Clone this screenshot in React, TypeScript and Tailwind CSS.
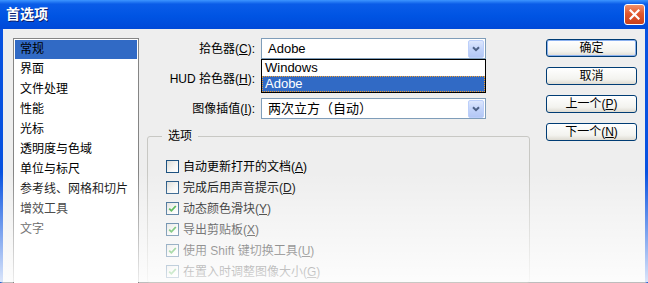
import React from 'react';

const font = "font-['Liberation_Sans','Noto_Sans_CJK_SC',sans-serif]";

const categories = [
  '常规',
  '界面',
  '文件处理',
  '性能',
  '光标',
  '透明度与色域',
  '单位与标尺',
  '参考线、网格和切片',
  '增效工具',
  '文字',
];

function Arrow() {
  return (
    <div className="flex h-[18px] w-[16px] items-center justify-center rounded-[2px] border border-[#bccffa] bg-[linear-gradient(180deg,#dde7fd_0%,#c3d4fa_50%,#b3c7f5_100%)]">
      <svg width="8" height="6" viewBox="0 0 8 6">
        <path d="M1 1.2 L4 4.2 L7 1.2" fill="none" stroke="#4d6185" strokeWidth="2" />
      </svg>
    </div>
  );
}

function Combo({ value }: { value: string }) {
  return (
    <div className="flex h-[21px] w-[225px] items-center justify-between border border-[#7f9db9] bg-white pl-[6px] pr-px text-[13px] text-black">
      <span>{value}</span>
      <Arrow />
    </div>
  );
}

function Check({ checked }: { checked: boolean }) {
  return (
    <div className="flex h-[13px] w-[13px] shrink-0 items-center justify-center border border-[#1c5180] bg-[linear-gradient(135deg,#dcdcd7_0%,#f6f6f4_60%,#ffffff_100%)]">
      {checked && (
        <svg width="9" height="9" viewBox="0 0 9 9">
          <path d="M1.2 4.6 L3.4 6.8 L7.8 2" fill="none" stroke="#21a121" strokeWidth="1.8" />
        </svg>
      )}
    </div>
  );
}

function Btn({ children, primary }: { children: React.ReactNode; primary?: boolean }) {
  return (
    <div
      className={
        primary
          ? 'flex h-[18px] w-[91px] items-center justify-center rounded-[3px] border border-[#003c74] bg-[linear-gradient(180deg,#ffffff_0%,#f3f3ef_70%,#dedbd2_100%)] text-[12px] text-black shadow-[inset_0_0_0_1px_#8ab0ef]'
          : 'flex h-[18px] w-[91px] items-center justify-center rounded-[3px] border border-[#003c74] bg-[linear-gradient(180deg,#ffffff_0%,#f3f3ef_70%,#dedbd2_100%)] text-[12px] text-black'
      }
    >
      {children}
    </div>
  );
}

const options = [
  { label: '自动更新打开的文档', key: 'A', checked: false },
  { label: '完成后用声音提示', key: 'D', checked: false },
  { label: '动态颜色滑块', key: 'Y', checked: true },
  { label: '导出剪贴板', key: 'X', checked: true },
  { label: '使用 Shift 键切换工具', key: 'U', checked: true },
  { label: '在置入时调整图像大小', key: 'G', checked: true },
];

export default function App() {
  return (
    <div className={`relative h-[283px] w-[648px] overflow-hidden bg-white ${font}`}>
      {/* Title bar */}
      <div className="flex h-[29px] items-center justify-between bg-[linear-gradient(180deg,#3d95ff_0%,#0a5ce8_14%,#0054e3_55%,#0049d8_100%)] pl-[6px] pr-[3px]">
        <span className="text-[14px] font-bold text-white [text-shadow:1px_1px_0_#0a1e6e]">首选项</span>
        <div className="flex h-[21px] w-[21px] items-center justify-center rounded-[3px] border border-white bg-[linear-gradient(180deg,#f0906a_0%,#e2582e_45%,#c9401c_100%)]">
          <svg width="11" height="11" viewBox="0 0 11 11">
            <path d="M1.5 1.5 L9.5 9.5 M9.5 1.5 L1.5 9.5" stroke="white" strokeWidth="2.2" strokeLinecap="square" />
          </svg>
        </div>
      </div>

      {/* Body */}
      <div className="flex h-[254px] border-x-[3px] border-b border-x-[#0852e0] border-b-[#bdbdbd] bg-[#eeeeee] pl-[10px] pt-[9px]">
        {/* Category list */}
        <div className="h-[260px] w-[126px] shrink-0 border border-[#858585] bg-white p-px">
          {categories.map((c, i) => (
            <div
              key={c}
              className={
                i === 0
                  ? 'h-[19px] bg-[#316ac5] pl-[5px] text-[12px] leading-[19px] text-black'
                  : 'h-[20px] pl-[5px] text-[12px] leading-[20px] text-black'
              }
            >
              {c}
            </div>
          ))}
        </div>

        {/* Middle column */}
        <div className="relative ml-[8px] flex w-[383px] shrink-0 flex-col">
          <div className="flex h-[21px] items-center gap-[6px]">
            <div className="w-[108px] text-right text-[12px] text-black">
              拾色器(<u>C</u>):
            </div>
            <Combo value="Adobe" />
          </div>
          <div className="mt-[9px] flex h-[21px] items-center gap-[6px]">
            <div className="w-[108px] text-right text-[12px] text-black">
              HUD 拾色器(<u>H</u>):
            </div>
            {/* hidden beneath the open list */}
            <Combo value="" />
          </div>
          <div className="mt-[9px] flex h-[21px] items-center gap-[6px]">
            <div className="w-[108px] text-right text-[12px] text-black">
              图像插值(<u>I</u>):
            </div>
            <Combo value="两次立方（自动）" />
          </div>

          {/* Open dropdown */}
          <div className="absolute left-[114px] top-[21px] flex h-[34px] w-[225px] flex-col border border-black bg-white text-[13px]">
            <div className="h-[16px] pl-[3px] leading-[16px] text-black">Windows</div>
            <div className="h-[16px] border border-dotted border-[#f0a030] bg-[#316ac5] pl-[2px] leading-[14px] text-white">Adobe</div>
          </div>

          <fieldset className="mt-[9px] h-[170px] rounded-[3px] border border-[#c8c8c4]">
            <legend className="ml-[14px] px-[6px] text-[12px] leading-[16px] text-black">选项</legend>
            <div className="flex flex-col pl-[18px] pt-[12px]">
              {options.map((o) => (
                <div key={o.key} className="flex h-[21px] items-center gap-[4px] text-[12px] text-black">
                  <Check checked={o.checked} />
                  <span>
                    {o.label}(<u>{o.key}</u>)
                  </span>
                </div>
              ))}
            </div>
          </fieldset>
        </div>

        {/* Buttons */}
        <div className="ml-[16px] mt-px flex flex-col gap-[10px]">
          <Btn primary>确定</Btn>
          <Btn>取消</Btn>
          <Btn>
            上一个(<u>P</u>)
          </Btn>
          <Btn>
            下一个(<u>N</u>)
          </Btn>
        </div>
      </div>

      {/* Fade at the bottom of the capture */}
      <div className="pointer-events-none absolute bottom-px left-0 right-0 top-[172px] bg-[linear-gradient(180deg,rgba(255,255,255,0)_0%,rgba(255,255,255,0.85)_100%)]" />
    </div>
  );
}
